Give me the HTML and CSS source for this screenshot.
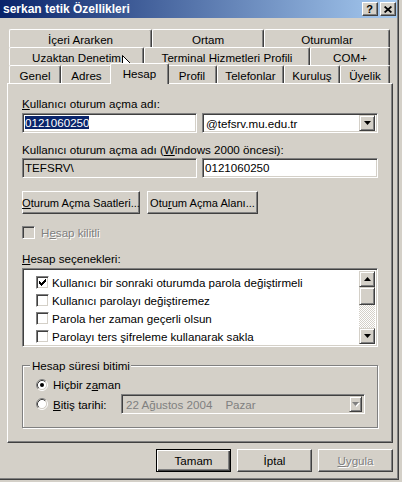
FILE: index.html
```html
<!DOCTYPE html>
<html lang="tr">
<head>
<meta charset="utf-8">
<title>serkan tetik Özellikleri</title>
<link rel="stylesheet" href="styles.css">
</head>
<body>
<div class="win">
  <div class="titlebar">
    <span class="title">serkan tetik Özellikleri</span>
    <div class="capbtns">
      <span class="cap help">?</span>
      <span class="cap close"><svg width="8" height="7" viewBox="0 0 8 7"><path d="M0.6 0.5L7.4 6.5M7.4 0.5L0.6 6.5" stroke="#000" stroke-width="1.7"/></svg></span>
    </div>
  </div>

  <div class="tabs">
    <div class="tabrow r1">
      <div class="tab">İçeri Ararken</div>
      <div class="tab">Ortam</div>
      <div class="tab">Oturumlar</div>
    </div>
    <div class="tabrow r2">
      <div class="tab">Uzaktan Denetim</div>
      <div class="tab">Terminal Hizmetleri Profili</div>
      <div class="tab">COM+</div>
    </div>
    <div class="tabrow r3">
      <div class="tab">Genel</div>
      <div class="tab">Adres</div>
      <div class="tab sel">Hesap</div>
      <div class="tab">Profil</div>
      <div class="tab">Telefonlar</div>
      <div class="tab">Kuruluş</div>
      <div class="tab">Üyelik</div>
    </div>
  </div>

  <div class="panel">
    <div class="lbl"><u>K</u>ullanıcı oturum açma adı:</div>
    <div class="row">
      <div class="edit"><span class="hl">0121060250</span></div>
      <div class="combo">
        <span class="combo-text">@tefsrv.mu.edu.tr</span>
        <span class="dd"><svg width="7" height="4" viewBox="0 0 7 4"><path d="M0 0h7L3.5 4z" fill="#000"/></svg></span>
      </div>
    </div>

    <div class="lbl lbl2">Kullanıcı oturum açma adı (<u>W</u>indows 2000 öncesi):</div>
    <div class="row row2">
      <div class="edit ro">TEFSRV\</div>
      <div class="edit wide">0121060250</div>
    </div>

    <div class="btnrow">
      <button class="btn b1"><u>O</u>turum Açma Saatleri...</button>
      <button class="btn b2">Otu<u>r</u>um Açma Alanı...</button>
    </div>

    <div class="chkrow disabled">
      <span class="chk dis"></span>
      <span class="dtext">H<u>e</u>sap kilitli</span>
    </div>

    <div class="lbl lbl3"><u>H</u>esap seçenekleri:</div>
    <div class="listbox">
      <div class="items">
        <div class="item"><span class="chk"><svg width="9" height="9" viewBox="0 0 9 9"><path d="M1 3h1v1h1v1h1V4h1V3h1V2h1V1h1v3H7v1H6v1H5v1H4v1H3V7H2V6H1z" fill="#000"/></svg></span>Kullanıcı bir sonraki oturumda parola değiştirmeli</div>
        <div class="item"><span class="chk"></span>Kullanıcı parolayı değiştiremez</div>
        <div class="item"><span class="chk"></span>Parola her zaman geçerli olsun</div>
        <div class="item"><span class="chk"></span>Parolayı ters şifreleme kullanarak sakla</div>
      </div>
      <div class="sb">
        <span class="sbtn"><svg width="7" height="4" viewBox="0 0 7 4"><path d="M3.5 0L7 4H0z" fill="#000"/></svg></span>
        <span class="thumb"></span>
        <span class="track"></span>
        <span class="sbtn"><svg width="7" height="4" viewBox="0 0 7 4"><path d="M0 0h7L3.5 4z" fill="#000"/></svg></span>
      </div>
    </div>

    <div class="group">
      <span class="legend">Hesap süresi bitimi</span>
      <div class="rrow r-first">
        <svg class="radio" width="12" height="12" viewBox="0 0 12 12">
          <circle cx="6" cy="6" r="4.5" fill="#fff"/>
          <path d="M2.11 9.89A5.5 5.5 0 0 1 9.89 2.11" stroke="#808080" fill="none"/>
          <path d="M9.89 2.11A5.5 5.5 0 0 1 2.11 9.89" stroke="#fff" fill="none"/>
          <path d="M2.82 9.18A4.5 4.5 0 0 1 9.18 2.82" stroke="#404040" fill="none"/>
          <path d="M9.18 2.82A4.5 4.5 0 0 1 2.82 9.18" stroke="#d4d0c8" fill="none"/>
          <circle cx="6" cy="6" r="2" fill="#000"/>
        </svg>
        <span>Hiçbir z<u>a</u>man</span>
      </div>
      <div class="rrow r-second">
        <svg class="radio" width="12" height="12" viewBox="0 0 12 12">
          <circle cx="6" cy="6" r="4.5" fill="#fff"/>
          <path d="M2.11 9.89A5.5 5.5 0 0 1 9.89 2.11" stroke="#808080" fill="none"/>
          <path d="M9.89 2.11A5.5 5.5 0 0 1 2.11 9.89" stroke="#fff" fill="none"/>
          <path d="M2.82 9.18A4.5 4.5 0 0 1 9.18 2.82" stroke="#404040" fill="none"/>
          <path d="M9.18 2.82A4.5 4.5 0 0 1 2.82 9.18" stroke="#d4d0c8" fill="none"/>
        </svg>
        <span class="rlabel"><u>B</u>itiş tarihi:</span>
        <div class="combo date">
          <span class="combo-text gray"><span>22 Ağustos 2004</span><span class="day">Pazar</span></span>
          <span class="dd ddsmall"><svg width="8" height="5" viewBox="0 0 8 5"><path d="M1 1h7L4.5 5z" fill="#fff"/><path d="M0 0h7L3.5 4z" fill="#808080"/></svg></span>
        </div>
      </div>
    </div>
  </div>

  <div class="footer">
    <button class="btn fbtn default">Tamam</button>
    <button class="btn fbtn">İptal</button>
    <button class="btn fbtn dis"><u>U</u>ygula</button>
  </div>

  <svg class="cursor" width="13" height="20" viewBox="0 0 13 20">
    <path d="M0.5 0.5V16.5L4.5 12.5L7.5 18.5L9.5 17.5L6.5 11.5H11.5Z" fill="#fff" stroke="#000"/>
  </svg>
</div>
</body>
</html>
```

FILE: styles.css
```css
* {
  box-sizing: border-box;
  margin: 0;
  padding: 0;
}

body {
  margin: 0;
  width: 402px;
  height: 482px;
  overflow: hidden;
  background: #d4d0c8;
  font-family: "Liberation Sans", Arial, sans-serif;
  font-size: 11.6px;
  color: #000;
}

u {
  text-decoration: underline;
  text-underline-offset: 1px;
}

.win {
  position: relative;
  width: 399px;
  height: 480px;
  border-right: 1px solid #404040;
  border-bottom: 1px solid #404040;
  box-shadow: inset -1px -1px #808080;
}

/* Title bar */
.titlebar {
  width: 397px;
  height: 18px;
  background: linear-gradient(to right, #0a246a, #a6caf0);
  display: flex;
  align-items: center;
  justify-content: space-between;
  padding-left: 3px;
  padding-right: 1px;
}

.title {
  color: #fff;
  font-weight: bold;
  font-size: 12px;
  white-space: nowrap;
}

.capbtns {
  display: flex;
  gap: 2px;
}

.cap {
  width: 16px;
  height: 14px;
  background: #d4d0c8;
  border: 1px solid;
  border-color: #fff #404040 #404040 #fff;
  box-shadow: inset -1px -1px #808080;
  display: flex;
  align-items: center;
  justify-content: center;
}

.help {
  font-weight: bold;
  font-size: 11px;
  line-height: 12px;
  padding-right: 1px;
}

/* Tabs */
.tabs {
  margin-top: 11px;
  margin-left: 9px;
  width: 381px;
}

.tabrow {
  display: grid;
  height: 18px;
}

.r1 { grid-template-columns: 143px 112px 1fr; }
.r2 { grid-template-columns: 135px 166px 1fr; }
.r3 { grid-template-columns: 52px 51px 55px 50px 67px 56px 1fr; }

.tab {
  height: 18px;
  background: #d4d0c8;
  border: 1px solid #fff;
  border-bottom: 0;
  border-right-color: #404040;
  border-radius: 2px 2px 0 0;
  box-shadow: inset -1px 0 #808080;
  display: flex;
  align-items: center;
  justify-content: center;
  white-space: nowrap;
  padding-top: 1px;
}

.tab.sel {
  position: relative;
  z-index: 2;
  height: 21px;
  margin: -2px -2px 0;
  padding-top: 0;
  padding-bottom: 1px;
}

/* Panel */
.panel {
  margin-left: 7px;
  width: 386px;
  height: 360px;
  border: 1px solid;
  border-color: #fff #404040 #404040 #fff;
  box-shadow: inset -1px -1px #808080;
  padding: 13px 14px 0;
  display: flex;
  flex-direction: column;
}

.lbl {
  height: 13px;
  line-height: 13px;
  white-space: nowrap;
}

.lbl2 { margin-top: 10px; }
.lbl3 { margin-top: 13px; }

.row {
  display: flex;
  gap: 5px;
  margin-top: 3px;
}

.row2 { margin-top: 2px; }

.edit,
.combo,
.listbox,
.chk {
  border: 1px solid;
  border-color: #808080 #fff #fff #808080;
  box-shadow: inset 1px 1px #404040, inset -1px -1px #d4d0c8;
}

.edit {
  width: 175px;
  height: 20px;
  background: #fff;
  padding: 1px 0 0 2px;
  line-height: 16px;
  white-space: nowrap;
}

.edit.wide { width: 176px; }
.edit.ro { background: #d4d0c8; }

.hl {
  background: #0a246a;
  color: #fff;
}

.combo {
  width: 176px;
  height: 20px;
  background: #fff;
  display: flex;
  align-items: center;
  justify-content: space-between;
  padding: 2px;
}

.combo-text {
  padding-left: 1px;
  white-space: nowrap;
}

.dd {
  width: 16px;
  height: 16px;
  background: #d4d0c8;
  border: 1px solid;
  border-color: #d4d0c8 #404040 #404040 #d4d0c8;
  box-shadow: inset 1px 1px #fff, inset -1px -1px #808080;
  display: flex;
  align-items: center;
  justify-content: center;
}

/* Buttons */
.btn {
  font: inherit;
  color: #000;
  height: 23px;
  background: #d4d0c8;
  border: 1px solid;
  border-color: #fff #404040 #404040 #fff;
  box-shadow: inset -1px -1px #808080;
  display: flex;
  align-items: center;
  justify-content: center;
  white-space: nowrap;
}

.btnrow {
  display: flex;
  gap: 7px;
  margin-top: 13px;
}

.btnrow .btn { font-size: 11.1px; }

.b1 { width: 118px; }
.b2 { width: 111px; }

/* Checkboxes */
.chkrow {
  display: flex;
  align-items: center;
  gap: 6px;
  height: 13px;
  margin-top: 12px;
}

.chk {
  width: 13px;
  height: 13px;
  background: #fff;
  flex: none;
  display: flex;
  align-items: center;
  justify-content: center;
}

.chk.dis { background: #d4d0c8; }

.dtext,
.dis {
  color: #808080;
  text-shadow: 1px 1px 0 #fff;
}

/* Listbox */
.listbox {
  height: 79px;
  margin-top: 3px;
  background: #fff;
  display: flex;
  padding: 2px;
}

.items {
  flex: 1;
  padding: 2px 0 0 11px;
}

.item {
  height: 18px;
  display: flex;
  align-items: center;
  gap: 3px;
  white-space: nowrap;
}

.sb {
  width: 16px;
  display: flex;
  flex-direction: column;
}

.sbtn,
.thumb {
  width: 16px;
  height: 16px;
  background: #d4d0c8;
  border: 1px solid;
  border-color: #d4d0c8 #404040 #404040 #d4d0c8;
  box-shadow: inset 1px 1px #fff, inset -1px -1px #808080;
  display: flex;
  align-items: center;
  justify-content: center;
  flex: none;
}

.thumb { height: 18px; }

.track {
  flex: 1;
  background: repeating-conic-gradient(#fff 0 25%, #d4d0c8 0 50%) 0 0 / 2px 2px;
}

/* Group box */
.group {
  margin-top: 18px;
  height: 63px;
  border: 1px solid #808080;
  box-shadow: inset 1px 1px #fff, 1px 1px #fff;
  padding: 0 12px 0 13px;
  display: flex;
  flex-direction: column;
}

.legend {
  align-self: flex-start;
  margin: -7px 0 0 -6px;
  padding: 0 1px 0 2px;
  height: 13px;
  line-height: 13px;
  background: #d4d0c8;
  white-space: nowrap;
}

.rrow {
  display: flex;
  align-items: center;
  white-space: nowrap;
}

.r-first {
  height: 13px;
  margin-top: 6px;
  gap: 5px;
}

.r-second {
  height: 20px;
  margin-top: 3px;
  gap: 5px;
}

.radio {
  flex: none;
  display: block;
}

.rlabel {
  width: 63px;
}

.combo.date {
  width: 244px;
  background: #d4d0c8;
}

.gray {
  color: #808080;
  padding-left: 2px;
}

.day {
  margin-left: 13px;
}

.ddsmall {
  width: 13px;
}

/* Footer */
.footer {
  margin: 6px 0 0 7px;
  width: 386px;
  display: flex;
  justify-content: flex-end;
  gap: 6px;
}

.fbtn { width: 75px; }

.btn.default {
  border: 1px solid #000;
  box-shadow: inset 1px 1px #fff, inset -1px -1px #404040, inset -2px -2px #808080;
}

/* Mouse pointer overlay */
.cursor {
  position: absolute;
  left: 122px;
  top: 55px;
}
```
